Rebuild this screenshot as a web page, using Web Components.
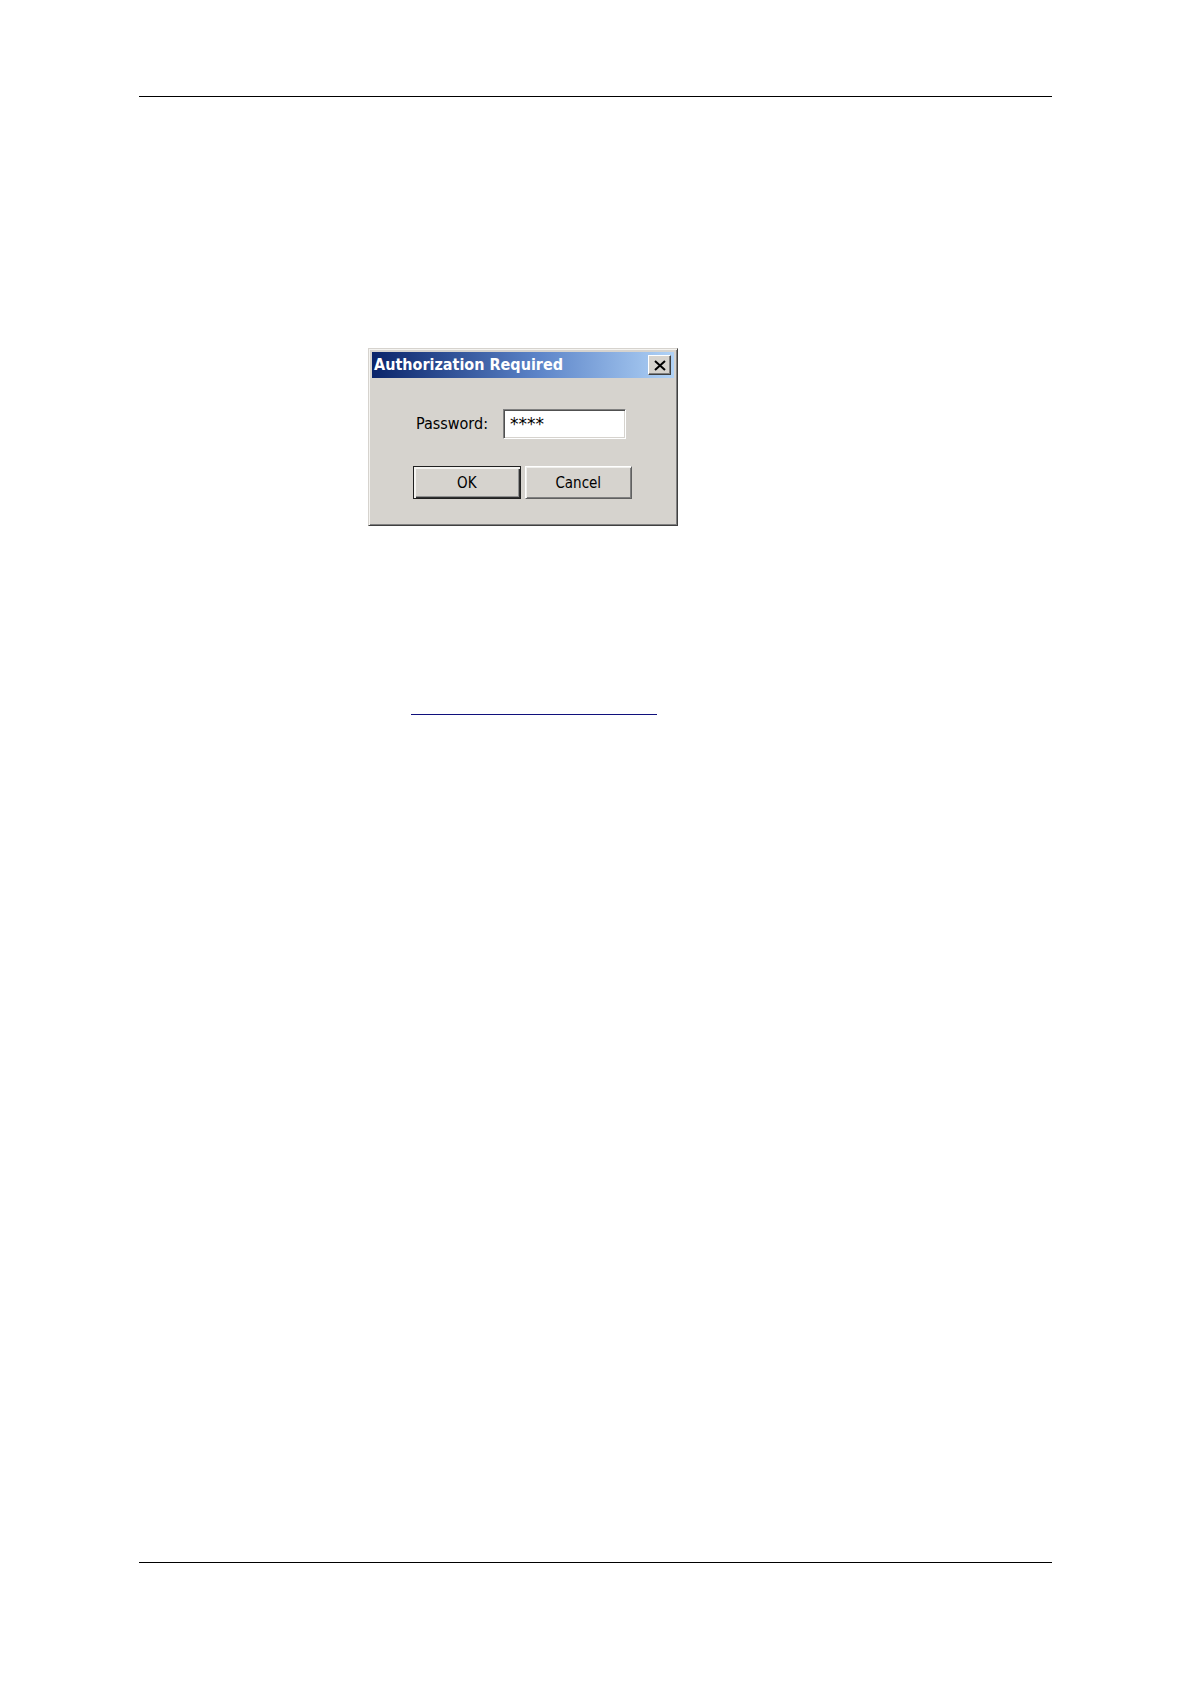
<!DOCTYPE html>
<html lang="en">
<head>
<meta charset="utf-8">
<title>Authorization Required</title>
<style>
    body {
        margin: 0;
        background: #fff;
        font-family: "DejaVu Sans Condensed", "DejaVu Sans", sans-serif;
    }
</style>
</head>
<body>
<manual-page>
    <dialog-box heading="Authorization Required">
        <password-field label="Password:" value="****"></password-field>
        <dialog-button slot="actions" default>OK</dialog-button>
        <dialog-button slot="actions">Cancel</dialog-button>
    </dialog-box>
    <blank-link href="#authorization" label="Authorization"></blank-link>
</manual-page>

<script>
// A sheet of the manual: a rule at the top, a rule at the bottom
class ManualPage extends HTMLElement {
    connectedCallback() {
        this.attachShadow({ mode: 'open' }).innerHTML = `
            <style>
                :host {
                    display: flex;
                    flex-direction: column;
                    box-sizing: border-box;
                    min-height: 100vh;
                    padding: 96px 139px 120px;
                }
                hr {
                    width: 100%;
                    margin: 0;
                    border: 0;
                    border-top: 1px solid #000;
                }
                main {
                    flex: 1;
                    padding: 251px 0 0 229px;
                }
            </style>
            <hr>
            <main><slot></slot></main>
            <hr>
        `;
    }
}

// Classic grey window with a gradient title bar
class DialogBox extends HTMLElement {
    connectedCallback() {
        this.attachShadow({ mode: 'open' }).innerHTML = `
            <style>
                :host {
                    display: block;
                    box-sizing: border-box;
                    width: 310px;
                    padding: 2px;
                    background: #d6d3ce;
                    border: 1px solid;
                    border-color: #d6d3ce #404040 #404040 #d6d3ce;
                    box-shadow: inset 1px 1px #f4f3f0, inset -1px -1px #808080;
                }
                header {
                    display: flex;
                    align-items: center;
                    justify-content: space-between;
                    height: 26px;
                    margin: 1px;
                    padding: 0 3px 0 2px;
                    background: linear-gradient(to right, #0a246a, #5c84c8 55%, #b0d2f6);
                }
                h1 {
                    margin: 0;
                    color: #fff;
                    font-size: 16px;
                    line-height: 20px;
                    white-space: nowrap;
                }
                .close {
                    display: flex;
                    align-items: center;
                    justify-content: center;
                    width: 23px;
                    height: 20px;
                    padding: 0;
                    background: #d6d3ce;
                    border: 1px solid;
                    border-color: #fff #404040 #404040 #fff;
                    box-shadow: inset -1px -1px #808080;
                }
                .body {
                    padding: 30px 43px 24px 42px;
                }
                .actions {
                    display: flex;
                    gap: 4px;
                    margin-top: 27px;
                }
            </style>
            <header>
                <h1>${this.getAttribute('heading')}</h1>
                <button class="close" aria-label="Close">
                    <svg width="12" height="11" viewBox="0 0 12 11">
                        <path d="M1 1 L11 10 M11 1 L1 10" stroke="#000" stroke-width="2"/>
                    </svg>
                </button>
            </header>
            <div class="body">
                <slot></slot>
                <div class="actions"><slot name="actions"></slot></div>
            </div>
        `;
    }
}

class PasswordField extends HTMLElement {
    connectedCallback() {
        this.attachShadow({ mode: 'open' }).innerHTML = `
            <style>
                :host {
                    display: flex;
                    align-items: center;
                    justify-content: space-between;
                    padding: 0 6px 0 3px;
                }
                label {
                    font-size: 16px;
                    line-height: 20px;
                }
                input {
                    box-sizing: border-box;
                    width: 123px;
                    height: 30px;
                    padding: 0 6px;
                    font-family: "DejaVu Sans", sans-serif;
                    font-size: 17px;
                    color: #000;
                    background: #fff;
                    border: 1px solid;
                    border-color: #808080 #fff #fff #808080;
                    box-shadow: inset 1px 1px #505050, inset -1px -1px #d6d3ce;
                    border-radius: 0;
                    outline: none;
                }
            </style>
            <label for="password">${this.getAttribute('label')}</label>
            <input id="password" type="text" value="${this.getAttribute('value')}">
        `;
    }
}

class DialogButton extends HTMLElement {
    connectedCallback() {
        this.attachShadow({ mode: 'open' }).innerHTML = `
            <style>
                :host {
                    display: block;
                    flex: 1;
                }
                button {
                    display: block;
                    width: 100%;
                    height: 33px;
                    padding: 0;
                    font: inherit;
                    font-size: 15px;
                    color: #000;
                    background: #d6d3ce;
                    border: 1px solid;
                    border-color: #fff #606060 #606060 #fff;
                    box-shadow: inset 1px 1px #f0efec, inset -1px -1px #808080;
                }
                :host([default]) button {
                    border-color: #202020;
                    box-shadow: inset 2px 2px #f4f3f0, inset -1px -1px #303030, inset -2px -2px #909090;
                }
            </style>
            <button><slot></slot></button>
        `;
    }
}

// Link that shows only its underline
class BlankLink extends HTMLElement {
    connectedCallback() {
        this.attachShadow({ mode: 'open' }).innerHTML = `
            <style>
                :host {
                    display: block;
                    margin: 168px 0 0 43px;
                }
                a {
                    display: block;
                    width: 246px;
                    height: 20px;
                    border-bottom: 1px solid #10107c;
                }
            </style>
            <a href="${this.getAttribute('href')}" aria-label="${this.getAttribute('label')}"></a>
        `;
    }
}

customElements.define('manual-page', ManualPage);
customElements.define('dialog-box', DialogBox);
customElements.define('password-field', PasswordField);
customElements.define('dialog-button', DialogButton);
customElements.define('blank-link', BlankLink);
</script>
</body>
</html>
